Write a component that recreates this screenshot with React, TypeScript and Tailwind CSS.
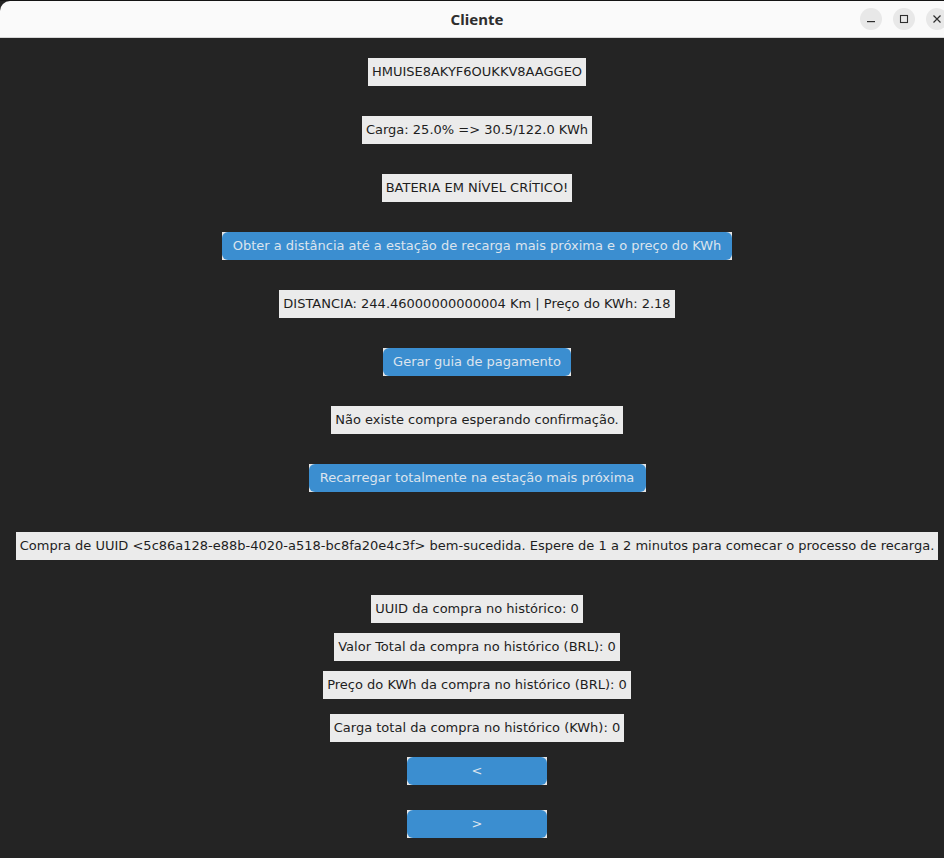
import React from "react";

const font = { fontFamily: '"DejaVu Sans", "Liberation Sans", sans-serif' };

function Label({ children, className = "" }: { children: React.ReactNode; className?: string }) {
  return (
    <div
      className={`h-[28px] flex items-center px-[4px] bg-[#ebebeb] text-[#1e1e1e] text-[13px] whitespace-nowrap ${className}`}
    >
      {children}
    </div>
  );
}

function Btn({ children, className = "" }: { children: React.ReactNode; className?: string }) {
  return (
    <div className={`h-[28px] bg-[#e6e6e6] ${className}`}>
      <div className="h-full w-full rounded-[6px] bg-[#3b8ed0] flex items-center justify-center text-[#dce4ee] text-[13px] whitespace-nowrap">
        {children}
      </div>
    </div>
  );
}

export default function App() {
  return (
    <div className="w-[944px] h-[858px] bg-[#242424] overflow-hidden">
      <div className="w-[954px] h-[858px] flex flex-col" style={font}>
        <div className="h-[1px] bg-[#141414] shrink-0" />
        <div className="h-[37px] shrink-0 bg-[#fafafa] rounded-tl-[10px] rounded-tr-[10px] border-b border-[#d6d6d6] flex items-center relative">
          <div
            className="absolute inset-0 flex items-center justify-center text-[15px] font-bold text-[#2e2e2e]"
            style={{ fontFamily: '"Noto Sans", "DejaVu Sans", sans-serif' }}
          >
            Cliente
          </div>
          <div className="ml-auto flex items-center gap-[11px] mr-[6px]">
            <div className="w-[22px] h-[22px] rounded-full bg-[#e8e8e8] flex items-center justify-center">
              <svg width="10" height="10" viewBox="0 0 10 10">
                <rect x="1" y="7" width="8" height="1.2" fill="#2e2e2e" />
              </svg>
            </div>
            <div className="w-[22px] h-[22px] rounded-full bg-[#e8e8e8] flex items-center justify-center">
              <svg width="10" height="10" viewBox="0 0 10 10">
                <rect x="1.5" y="1.5" width="7" height="7" fill="none" stroke="#2e2e2e" strokeWidth="1.1" />
              </svg>
            </div>
            <div className="w-[22px] h-[22px] rounded-full bg-[#e8e8e8] flex items-center justify-center">
              <svg width="10" height="10" viewBox="0 0 10 10">
                <path d="M1.5 1.5 L8.5 8.5 M8.5 1.5 L1.5 8.5" stroke="#2e2e2e" strokeWidth="1.2" />
              </svg>
            </div>
          </div>
        </div>

        <div className="flex flex-col items-center">
          <Label className="mt-[20px]">HMUISE8AKYF6OUKKV8AAGGEO</Label>
          <Label className="mt-[30px]">Carga: 25.0% =&gt; 30.5/122.0 KWh</Label>
          <Label className="mt-[30px]">BATERIA EM NÍVEL CRÍTICO!</Label>
          <Btn className="mt-[30px] w-[510px]">
            Obter a distância até a estação de recarga mais próxima e o preço do KWh
          </Btn>
          <Label className="mt-[30px]">DISTANCIA: 244.46000000000004 Km | Preço do KWh: 2.18</Label>
          <Btn className="mt-[30px] w-[188px]">Gerar guia de pagamento</Btn>
          <Label className="mt-[30px]">Não existe compra esperando confirmação.</Label>
          <Btn className="mt-[30px] w-[337px]">Recarregar totalmente na estação mais próxima</Btn>
          <Label className="mt-[40px]">
            Compra de UUID &lt;5c86a128-e88b-4020-a518-bc8fa20e4c3f&gt; bem-sucedida. Espere de 1 a 2 minutos para comecar o processo de recarga.
          </Label>
          <Label className="mt-[35px]">UUID da compra no histórico: 0</Label>
          <Label className="mt-[10px]">Valor Total da compra no histórico (BRL): 0</Label>
          <Label className="mt-[10px]">Preço do KWh da compra no histórico (BRL): 0</Label>
          <Label className="mt-[15px]">Carga total da compra no histórico (KWh): 0</Label>
          <Btn className="mt-[15px] w-[140px]">&lt;</Btn>
          <Btn className="mt-[25px] w-[140px]">&gt;</Btn>
        </div>
      </div>
    </div>
  );
}
